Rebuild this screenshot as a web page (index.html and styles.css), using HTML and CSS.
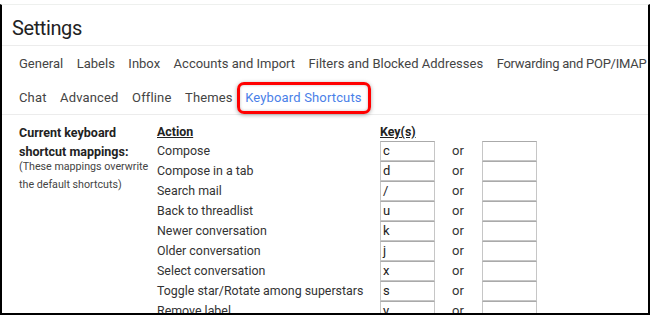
FILE: index.html
```html
<!DOCTYPE html>
<html>
<head>
<meta charset="utf-8">
<link rel="stylesheet" href="styles.css">
</head>
<body>
<div class="frame">
  <h1 class="title">Settings</h1>
  <nav class="tabs">
    <div class="tab-row">
      <span class="tab">General</span>
      <span class="tab">Labels</span>
      <span class="tab">Inbox</span>
      <span class="tab">Accounts and Import</span>
      <span class="tab">Filters and Blocked Addresses</span>
      <span class="tab tight">Forwarding and POP/IMAP</span>
    </div>
    <div class="tab-row">
      <span class="tab">Chat</span>
      <span class="tab">Advanced</span>
      <span class="tab">Offline</span>
      <span class="tab">Themes</span>
      <span class="tab active">Keyboard Shortcuts<span class="highlight"></span></span>
    </div>
  </nav>
  <section class="content">
    <div class="side">
      <div class="side-title">Current keyboard shortcut mappings:</div>
      <div class="side-note">(These mappings overwrite the default shortcuts)</div>
    </div>
    <div class="grid">
      <div class="head">Action</div>
      <div class="head">Key(s)</div>
      <div></div>
      <div></div>

      <div class="act">Compose</div><div class="box">c</div><div class="or">or</div><div class="box"></div>
      <div class="act">Compose in a tab</div><div class="box">d</div><div class="or">or</div><div class="box"></div>
      <div class="act">Search mail</div><div class="box">/</div><div class="or">or</div><div class="box"></div>
      <div class="act">Back to threadlist</div><div class="box">u</div><div class="or">or</div><div class="box"></div>
      <div class="act">Newer conversation</div><div class="box">k</div><div class="or">or</div><div class="box"></div>
      <div class="act">Older conversation</div><div class="box">j</div><div class="or">or</div><div class="box"></div>
      <div class="act">Select conversation</div><div class="box">x</div><div class="or">or</div><div class="box"></div>
      <div class="act">Toggle star/Rotate among superstars</div><div class="box">s</div><div class="or">or</div><div class="box"></div>
      <div class="act">Remove label</div><div class="box">y</div><div class="or">or</div><div class="box"></div>
    </div>
  </section>
</div>
</body>
</html>
```

FILE: styles.css
```css
html, body {
  margin: 0;
  padding: 0;
  background: #fff;
  overflow: hidden;
}
body {
  width: 650px;
  height: 315px;
  padding-top: 4px;
  box-sizing: border-box;
}
.frame {
  height: 311px;
  box-sizing: border-box;
  border-top: 1px solid #eef0ee;
  border-left: 2px solid #000;
  border-right: 2px solid #000;
  border-bottom: 2px solid #000;
  overflow: hidden;
  font-family: Roboto, "Liberation Sans", sans-serif;
  color: #222;
}
.title {
  margin: 0;
  padding: 10px 0 0 10px;
  height: 30px;
  font-family: Roboto, "Open Sans", sans-serif;
  font-weight: 400;
  font-size: 20px;
  letter-spacing: -0.4px;
  line-height: 26px;
  color: #222;
  border-bottom: 1px solid #ececec;
}
.tabs {
  padding: 0 0 0 17px;
  border-bottom: 1px solid #ececec;
}
.tab-row {
  display: flex;
  gap: 13.5px;
  height: 34px;
  align-items: center;
}
.tab {
  font-family: Roboto, "Open Sans", sans-serif;
  font-size: 13px;
  color: #444;
  white-space: nowrap;
}
.tab.tight {
  letter-spacing: -0.25px;
}
.tab-row + .tab-row .tab {
  letter-spacing: 0.15px;
}
.tab.active {
  position: relative;
  color: #4a7fe8;
  letter-spacing: 0.3px;
  margin-left: -1px;
}
.highlight {
  position: absolute;
  left: -8px;
  right: -9px;
  top: -8px;
  bottom: -9px;
  border: 3px solid #f00;
  border-radius: 7px;
  box-shadow: 0 1px 4px rgba(0,0,0,0.35), inset 0 0 3px rgba(0,0,0,0.25);
}
.content {
  display: flex;
  padding: 7px 0 0 17px;
}
.side {
  width: 138px;
  flex: none;
  padding-top: 1px;
}
.side-title {
  font-weight: 700;
  font-size: 12.5px;
  line-height: 19px;
  color: #222;
}
.side-note {
  font-size: 10.7px;
  line-height: 18px;
  color: #444;
  margin-top: -3px;
}
.grid {
  display: grid;
  grid-template-columns: 223px 55px 47px 55px;
  grid-template-rows: 19px;
  grid-auto-rows: 20px;
  font-size: 12.4px;
  color: #333;
}
.head {
  font-weight: 700;
  text-decoration: underline;
  color: #222;
  line-height: 19px;
}
.act {
  line-height: 20px;
  white-space: nowrap;
}
.box {
  border: 1px solid #c6c6c6;
  border-top-color: #aaa;
  height: 20px;
  box-sizing: border-box;
  line-height: 18px;
  padding-left: 2px;
  color: #222;
  font-size: 13px;
}
.or {
  line-height: 20px;
  padding-left: 17px;
  font-size: 13px;
}
```
